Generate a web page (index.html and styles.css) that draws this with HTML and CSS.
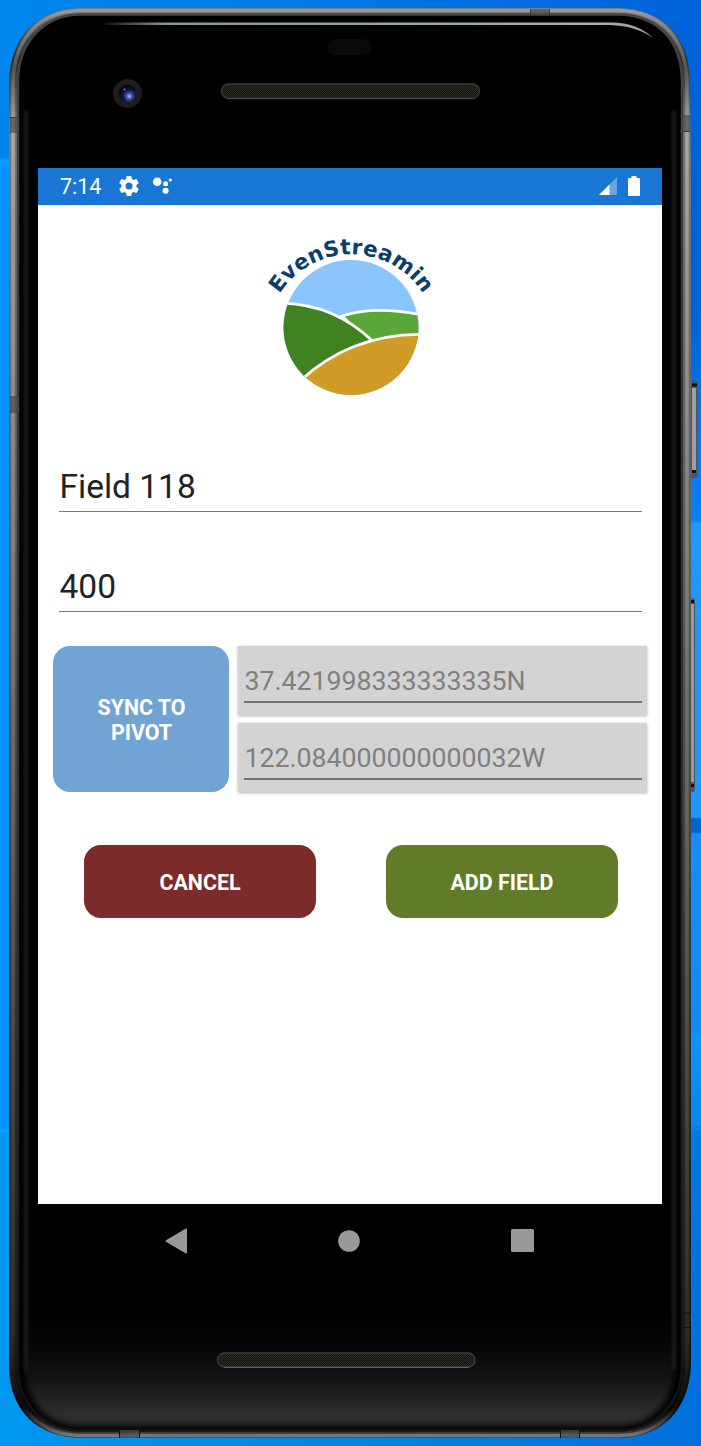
FILE: index.html
```html
<!DOCTYPE html>
<html lang="en">
<head>
<meta charset="utf-8">
<title>EvenStreamin</title>
<link rel="stylesheet" href="styles.css">
</head>
<body>
<div class="desktop">
  <svg class="device" width="701" height="1446" viewBox="0 0 701 1446" aria-hidden="true">
    <defs>
      <linearGradient id="rim" x1="0" y1="0" x2="0" y2="1">
        <stop offset="0" stop-color="#777"/><stop offset=".035" stop-color="#2a2a2a"/><stop offset=".08" stop-color="#777"/>
        <stop offset=".4" stop-color="#5c5c5c"/><stop offset=".75" stop-color="#2c2c2c"/><stop offset=".93" stop-color="#1c1c1c"/>
        <stop offset=".98" stop-color="#050505"/><stop offset="1" stop-color="#444"/>
      </linearGradient>
      <linearGradient id="shine" x1="0" y1="0" x2="0" y2="1">
        <stop offset="0" stop-color="#999"/><stop offset=".04" stop-color="#555"/><stop offset=".08" stop-color="#a6a6a6"/>
        <stop offset=".4" stop-color="#7c7c7c"/><stop offset=".75" stop-color="#484848"/><stop offset=".93" stop-color="#2c2c2c"/>
        <stop offset=".98" stop-color="#0c0c0c"/><stop offset=".995" stop-color="#555"/><stop offset="1" stop-color="#777"/>
      </linearGradient>
      <linearGradient id="inner" x1="0" y1="0" x2="0" y2="1">
        <stop offset="0" stop-color="#444"/><stop offset=".7" stop-color="#2a2a2a"/><stop offset="1" stop-color="#111"/>
      </linearGradient>
      <linearGradient id="chin" x1="0" y1="0" x2="0" y2="1">
        <stop offset="0" stop-color="#000"/><stop offset=".35" stop-color="#080808"/><stop offset=".6" stop-color="#151515"/><stop offset=".92" stop-color="#303030"/><stop offset="1" stop-color="#2a2a2a"/>
      </linearGradient>
      <linearGradient id="glint" x1="0" y1="0" x2="1" y2="0">
        <stop offset="0" stop-color="#9aa" stop-opacity="0"/><stop offset=".12" stop-color="#899595"/><stop offset=".9" stop-color="#a5b0b0"/><stop offset="1" stop-color="#999"/>
      </linearGradient>
      <radialGradient id="lens" cx=".6" cy=".65" r=".6">
        <stop offset="0" stop-color="#a6b8ff"/><stop offset=".28" stop-color="#3b4f9e"/><stop offset=".6" stop-color="#10163c"/><stop offset="1" stop-color="#05060f"/>
      </radialGradient>
      <pattern id="mesh" width="2" height="2" patternUnits="userSpaceOnUse">
        <rect width="2" height="2" fill="#15140f"/><path d="M0 0h1v1H0zM1 1h1v1H1z" fill="#2d2b25"/>
      </pattern>
      <filter id="soft" x="-10%" y="-2%" width="120%" height="104%" color-interpolation-filters="sRGB"><feGaussianBlur stdDeviation="1.500"/></filter>
      <filter id="haze" x="-10%" y="-30%" width="120%" height="160%" color-interpolation-filters="sRGB"><feGaussianBlur stdDeviation="3"/></filter>
    </defs>

    <g>
      <rect x="688" y="381" width="9.500" height="97" rx="2" fill="#555"/>
      <rect x="692" y="388" width="4" height="83" fill="#a0a0a0"/>
      <path d="M692 383.500h5v3h-5zM692 470h4v3h-4z" fill="#111"/>
      <rect x="688" y="598" width="7" height="194" rx="2" fill="#555"/>
      <rect x="690" y="604" width="4" height="178" fill="#9a9a9a"/>
      <path d="M690 600h4v3h-4zM690 784h4v3h-4z" fill="#111"/>
    </g>

    <path d="M80 8H618C662 9 689 35 690 82L691 180V1365C689 1410 662 1438 618 1438H82C38 1438 10 1411 9 1368V82C10 36 38 9 80 8Z" fill="url(#rim)"/>
    <path d="M80 10.500H618C660 11 686 37 687 82V1365C686 1408 660 1435.500 618 1435.500H82C40 1435.500 14 1408 13 1368V82C14 38 40 11 80 10.500Z" fill="none" stroke="url(#shine)" stroke-width="3.500"/>
    <path d="M80 14.500H618C657 15 682 40 682 82V1365C682 1404 655 1430.500 618 1430.500H82C44 1430.500 18 1404 18 1368V82C18 42 44 15 80 14.500Z" fill="#000" stroke="url(#inner)" stroke-width="2.500"/>
    <path d="M25 1310H675V1365C675 1400 652 1426 618 1426H82C48 1426 25 1402 25 1368Z" fill="url(#chin)" filter="url(#haze)"/>
    <g filter="url(#soft)">
      <path d="M26 1372V110M674 110V1370" fill="none" stroke="#1b1b1b" stroke-width="4"/>
    </g>
    <path d="M38 1204H662V1310H38Z"/>
    <path d="M100 22.500H610Q637 22 653.500 38.500Q637 26 610 25H100Z" fill="url(#glint)"/>

    <g fill="none" stroke="#3c3c3c">
      <path d="M9.500 117.500H19M9.500 132H19M680 116H690M680 131.500H690M530.500 9V16M549.500 9V16M9.500 397H19M9.500 412H19"/>
      <path d="M681 1313H691M681 1327.500H691M119.500 1429V1438M139.500 1429V1438M560.500 1429V1438M579.500 1429V1438" stroke="#111"/>
      <path d="M10 117.500H19V131.500H10ZM10 397.500H19V411.500H10ZM681 116.500H690V131H681ZM531 9H549V15H531ZM120 1430H139V1438H120ZM561 1430H579V1438H561Z" fill="#4c4c4c" fill-opacity=".7" stroke="none"/>
    </g>

    <rect x="327" y="39" width="45" height="16" rx="8" fill="#08090d"/>
    <circle cx="127.500" cy="93.500" r="14.500" fill="#1e1c1d"/>
    <circle cx="127.500" cy="93.500" r="9" fill="url(#lens)"/>
    <circle cx="124.500" cy="89.500" r="1" fill="#6c7fd0"/>
    <rect x="221.500" y="84" width="258" height="14.500" rx="7.250" fill="url(#mesh)" stroke="#373736" stroke-width="1.500"/>
    <path d="M228 98.500H473" stroke="#4c4c48"/>
    <rect x="217.500" y="1353" width="257.500" height="14" rx="7" fill="url(#mesh)" stroke="#3b3b3a" stroke-width="1.500"/>
    <path d="M224 1367.500H469" stroke="#65655c"/>
  </svg>

  <main class="screen">
    <header class="status">
      <span class="clock">7:14</span>
      <svg class="gear" width="20" height="20" viewBox="2 2 20 20"><path fill="#fff" d="M19.430 12.980c.04-.32.07-.64.07-.98s-.03-.66-.07-.98l2.110-1.650c.19-.15.24-.42.12-.64l-2-3.460c-.12-.22-.39-.3-.61-.22l-2.490 1c-.52-.4-1.080-.73-1.690-.98l-.38-2.650A.488.488 0 0 0 14 2h-4c-.25 0-.46.18-.49.42l-.38 2.650c-.61.25-1.170.59-1.690.98l-2.490-1c-.23-.09-.49 0-.61.22l-2 3.460c-.13.22-.07.49.12.64l2.110 1.650c-.04.32-.07.65-.07.98s.03.66.07.98l-2.110 1.650c-.19.15-.24.42-.12.64l2 3.460c.12.22.39.3.61.22l2.490-1c.52.4 1.080.73 1.690.98l.38 2.650c.03.24.24.42.49.42h4c.25 0 .46-.18.49-.42l.38-2.650c.61-.25 1.170-.59 1.690-.98l2.490 1c.23.09.49 0 .61-.22l2-3.460c.12-.22.07-.49-.12-.64zM12 15.500A3.500 3.500 0 1 1 12 8.500a3.500 3.500 0 0 1 0 7z"/></svg>
      <svg class="assistant" width="20" height="18" viewBox="0 0 20 18" fill="#fff"><circle cx="4.200" cy="4.800" r="4.300"/><circle cx="12.600" cy="6.800" r="2.500"/><circle cx="12.600" cy="13.800" r="3"/><circle cx="17.300" cy="3" r="1.600"/></svg>
      <svg class="signal" width="18" height="18" viewBox="0 0 18 18"><path d="M18 0V18H0Z" fill="#67a5e2"/><path d="M10.500 7.500V18H0Z" fill="#fff"/></svg>
      <svg width="12" height="20" viewBox="0 0 12 20"><path d="M3.500 0h5v2H11q1 0 1 1V19q0 1-1 1H1q-1 0-1-1V3q0-1 1-1H3.500Z" fill="#fff"/></svg>
    </header>

    <svg class="logo" width="200" height="180" viewBox="250 225 200 180" role="img" aria-label="EvenStreamin">
      <defs>
        <clipPath id="disc"><circle cx="351" cy="327.500" r="67.500"/></clipPath>
        <path id="arc" d="M279.500 294A85 85 0 0 1 424.500 296"/>
      </defs>
      <text class="brand"><textPath href="#arc" textLength="171" lengthAdjust="spacing">EvenStreamin</textPath></text>
      <g clip-path="url(#disc)">
        <rect x="280" y="258" width="142" height="140" fill="#8bc5ff"/>
        <path d="M342 316Q375 305 425 315.500V345L372 345Z" fill="#59a738" stroke="#fff" stroke-width="2.800"/>
        <path d="M278 303Q333 303 372.500 341Q335 352 304 380L270 360Z" fill="#408122" stroke="#fff" stroke-width="2.800"/>
        <path d="M300 381Q352 333 425 334.500V400H300Z" fill="#d19b28" stroke="#fff" stroke-width="2.800"/>
      </g>
    </svg>

    <form class="form">
      <div class="field">Field 118</div>
      <div class="field">400</div>
      <div class="location">
        <button type="button" class="btn sync">SYNC TO PIVOT</button>
        <div class="coords">
          <div class="coord"><span>37.421998333333335N</span></div>
          <div class="coord"><span>122.084000000000032W</span></div>
        </div>
      </div>
      <div class="actions">
        <button type="button" class="btn cancel">CANCEL</button>
        <button type="button" class="btn add">ADD FIELD</button>
      </div>
    </form>
  </main>

  <nav class="nav">
    <svg width="22" height="26" viewBox="0 0 22 26"><path d="M21 1.500V24.500L1.500 13Z" fill="#999" stroke="#999" stroke-width="2" stroke-linejoin="round"/></svg>
    <svg width="22" height="22" viewBox="0 0 22 22"><circle cx="11" cy="11" r="10.800" fill="#999"/></svg>
    <svg width="23" height="23" viewBox="0 0 23 23"><rect width="23" height="23" rx="1.500" fill="#999"/></svg>
  </nav>
</div>
</body>
</html>
```
FILE: styles.css
```css
* { box-sizing: border-box; }
body { margin: 0; font-family: Roboto, "Liberation Sans", sans-serif; }
svg { display: block; flex: none; }

.desktop {
  position: relative;
  width: 701px;
  height: 1446px;
  padding: 168px 39px 0 38px;
  overflow: hidden;
  background:
    linear-gradient(90deg, #0086ec, #0078e6 50%, #0062d9) top / 100% 60px no-repeat,
    linear-gradient(90deg, #0098f0, #0086e8 50%, #006fdc) bottom / 100% 60px no-repeat,
    linear-gradient(#0062d9 0, #0062d9 300px, #0878ee 440px, #0a80f4 520px, #1f98ff 524px, #1e98ff 817px, #0064d0 819px, #0064d0 832px, #168cf6 834px, #128af6 1030px, #0a96fa 1036px, #0888f0 1125px, #007ae6 1132px, #006fdc 1446px) right / 40px 100% no-repeat,
    linear-gradient(#0086ec 0, #0084ea 157px, #10a0fc 161px, #0092fa 170px, #0092fa 1127px, #0ca2f4 1130px, #0099ee 1134px, #0098f0 1446px) left / 40px 100% no-repeat,
    #0080e8;
}
.device { position: absolute; inset: 0; }

.screen {
  position: relative;
  height: 1036px;
  background: #fff;
}
.status {
  display: flex;
  align-items: center;
  height: 36.500px;
  padding: 0 22px 0 22px;
  background: #1976d4;
  color: #fff;
}
.clock { width: 59px; font-size: 21.500px; line-height: 36px; padding-top: 2px; }
.assistant { margin-left: 14px; }
.signal { margin: 0 11px 0 auto; }
.logo { margin: 20.500px 0 0 212px; }

.form { padding: 56px 15px 0; }
.field {
  height: 51px;
  margin: 0 5px 49px 6px;
  padding-left: 0.500px;
  border-bottom: 1.500px solid #7b7b7b;
  color: #222;
  font-size: 33.500px;
  line-height: 52px;
}
.location { display: flex; gap: 9px; margin-top: -15px; }
.btn {
  border: 0;
  padding: 0;
  border-radius: 17px;
  color: #fff;
  font: 700 21.400px/25px Roboto, "Liberation Sans", sans-serif;
}
.sync { width: 176px; height: 146px; padding: 2px 37px 0 38px; background: #72a3d5; }
.coords { flex: 1; display: grid; gap: 8px; }
.coord {
  height: 69px;
  padding: 12px 5px 0 6px;
  background: #d3d3d3;
  box-shadow: 0 1px 3px rgba(0, 0, 0, .3);
}
.coord span {
  display: block;
  height: 45px;
  padding-left: 0.500px;
  border-bottom: 2px solid #727473;
  color: #808080;
  font-size: 26.700px;
  line-height: 47px;
}
.actions { display: flex; justify-content: space-between; padding: 53px 29px 0 31px; }
.cancel, .add { width: 232px; height: 73px; padding-top: 1px; }
.cancel { background: #7d2b2a; }
.add { background: #607c28; }

.nav {
  position: relative;
  display: flex;
  justify-content: space-between;
  align-items: center;
  height: 73px;
  padding: 0 128px 0 127px;
}
.brand { font: 700 21.500px "DejaVu Sans", sans-serif; fill: #0b3f6b; }
```
